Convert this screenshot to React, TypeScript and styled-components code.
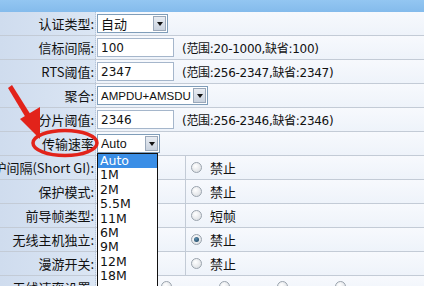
import React from "react";
import styled, { createGlobalStyle } from "styled-components";

const GlobalStyle = createGlobalStyle`
    body, html {
        margin: 0;
        padding: 0;
        overflow: hidden;
        background: #f2f6fb;
    }
`;

const Page = styled.div`
    position: relative;
    width: 424px;
    height: 286px;
    overflow: hidden;
    font-family: "Noto Sans CJK SC", "DejaVu Sans", sans-serif;
    font-size: 13px;
    color: #111;
    background: #f2f6fb;
`;

const TopBar = styled.div`
    height: 12px;
    background: linear-gradient(#93c6f2, #84bbec);
`;

const Row = styled.div<{ $split?: boolean }>`
    display: grid;
    grid-template-columns: ${(p) => (p.$split ? "96px 90px 1fr" : "96px 1fr")};
    height: 24px;
    border-bottom: 1px solid #c3cbd6;
    box-sizing: border-box;
    background: linear-gradient(#f7f9fd, #eef3fa);
`;

const Label = styled.div`
    display: flex;
    align-items: center;
    justify-content: flex-end;
    padding-right: 1px;
    white-space: nowrap;
    overflow: hidden;
    background: linear-gradient(90deg, #cfdcee, #dbe6f4);
    border-right: 1px dotted #b7c6da;
`;

const Cell = styled.div<{ $line?: boolean }>`
    display: flex;
    align-items: center;
    gap: 8px;
    padding-left: 1px;
    white-space: nowrap;
    border-right: ${(p) => (p.$line ? "1px solid #c3cbd6" : "none")};
`;

const RadioCell = styled.div`
    display: flex;
    align-items: center;
    gap: 8px;
    padding-left: 5px;
    white-space: nowrap;
`;

const SelectBox = styled.div<{ $w: number }>`
    position: relative;
    display: flex;
    align-items: center;
    width: ${(p) => p.$w}px;
    height: 19px;
    box-sizing: border-box;
    border: 1px solid #7f9db9;
    background: #fff;
    padding-left: 3px;
    font-size: 12px;
`;

const SelectText = styled.span<{ $latin?: boolean }>`
    flex: 1;
    min-width: 0;
    overflow: hidden;
    white-space: nowrap;
    font-family: ${(p) => (p.$latin ? '"Liberation Sans", sans-serif' : '"Noto Sans CJK SC", sans-serif')};
    font-size: ${(p) => (p.$latin ? "11.5px" : "13px")};
`;

const ArrowBtn = styled.span`
    flex: none;
    width: 13px;
    height: 15px;
    margin-right: 1px;
    display: flex;
    align-items: center;
    justify-content: center;
    background: linear-gradient(#e8ecf2, #c9d2de);
    border: 1px solid #9aa8ba;
    box-sizing: border-box;
    &::after {
        content: "";
        border-left: 3px solid transparent;
        border-right: 3px solid transparent;
        border-top: 4px solid #111;
    }
`;

const TextInput = styled.div`
    display: flex;
    align-items: center;
    width: 77px;
    height: 19px;
    box-sizing: border-box;
    border: 1px solid #a5b6cb;
    background: #fff;
    padding-left: 3px;
    font-family: "DejaVu Sans", sans-serif;
    font-size: 12px;
`;

const Hint = styled.span`
    font-family: "DejaVu Sans", "Noto Sans CJK SC", sans-serif;
    font-size: 12px;
    letter-spacing: -0.3px;
`;

const DropList = styled.div`
    position: absolute;
    top: 18px;
    left: -1px;
    width: 61px;
    background: #fff;
    border: 1px solid #111;
    box-sizing: border-box;
    z-index: 2;
`;

const DropItem = styled.div<{ $active?: boolean }>`
    height: 14.4px;
    line-height: 14.4px;
    padding-left: 2px;
    font-family: "DejaVu Sans", sans-serif;
    font-size: 12.5px;
    color: ${(p) => (p.$active ? "#fff" : "#111")};
    background: ${(p) => (p.$active ? "#3a8ee6" : "transparent")};
`;

const Radio = styled.span<{ $checked?: boolean }>`
    flex: none;
    width: 11px;
    height: 11px;
    border-radius: 50%;
    box-sizing: border-box;
    border: 1px solid #9aa3ad;
    background: radial-gradient(circle at 40% 35%, #ffffff, #d4d8dd);
    display: flex;
    align-items: center;
    justify-content: center;
    &::after {
        content: "";
        display: ${(p) => (p.$checked ? "block" : "none")};
        width: 5px;
        height: 5px;
        border-radius: 50%;
        background: radial-gradient(circle at 40% 35%, #5f8fb0, #123a55);
    }
`;

const BottomRadios = styled.div`
    display: flex;
    align-items: flex-start;
    padding-top: 5px;
    gap: 47px;
    padding-left: 65px;
`;

const Overlay = styled.svg`
    position: absolute;
    left: 0;
    top: 0;
    pointer-events: none;
    z-index: 3;
`;

const rates = ["Auto", "1M", "2M", "5.5M", "11M", "6M", "9M", "12M", "18M", "24M"];

const radioRows = [
    { label: "保护间隔(Short GI):", value: "禁止" },
    { label: "保护模式:", value: "禁止" },
    { label: "前导帧类型:", value: "短帧" },
    { label: "无线主机独立:", value: "禁止", checked: true },
    { label: "漫游开关:", value: "禁止" },
];

const App: React.FC = () => {
    return (
        <>
            <GlobalStyle />
            <Page>
                <TopBar />
                <Row>
                    <Label>认证类型:</Label>
                    <Cell>
                        <SelectBox $w={71}>
                            <SelectText>自动</SelectText>
                            <ArrowBtn />
                        </SelectBox>
                    </Cell>
                </Row>
                <Row>
                    <Label>信标间隔:</Label>
                    <Cell>
                        <TextInput>100</TextInput>
                        <Hint>(范围:20-1000,缺省:100)</Hint>
                    </Cell>
                </Row>
                <Row>
                    <Label>RTS阈值:</Label>
                    <Cell>
                        <TextInput>2347</TextInput>
                        <Hint>(范围:256-2347,缺省:2347)</Hint>
                    </Cell>
                </Row>
                <Row>
                    <Label>聚合:</Label>
                    <Cell>
                        <SelectBox $w={111}>
                            <SelectText $latin>AMPDU+AMSDU</SelectText>
                            <ArrowBtn />
                        </SelectBox>
                    </Cell>
                </Row>
                <Row>
                    <Label>分片阈值:</Label>
                    <Cell>
                        <TextInput>2346</TextInput>
                        <Hint>(范围:256-2346,缺省:2346)</Hint>
                    </Cell>
                </Row>
                <Row>
                    <Label>传输速率</Label>
                    <Cell>
                        <SelectBox $w={63}>
                            <SelectText $latin style={{ fontSize: 12.5 }}>Auto</SelectText>
                            <ArrowBtn />
                            <DropList>
                                {rates.map((r, i) => (
                                    <DropItem key={r} $active={i === 0}>{r}</DropItem>
                                ))}
                            </DropList>
                        </SelectBox>
                    </Cell>
                </Row>
                {radioRows.map((r) => (
                    <Row $split key={r.label}>
                        <Label>{r.label}</Label>
                        <Cell $line />
                        <RadioCell>
                            <Radio $checked={r.checked} />
                            <span>{r.value}</span>
                        </RadioCell>
                    </Row>
                ))}
                <Row>
                    <Label>无线速率设置:</Label>
                    <BottomRadios>
                        <Radio />
                        <Radio />
                        <Radio />
                        <Radio />
                    </BottomRadios>
                </Row>
                <Overlay width="424" height="286" viewBox="0 0 424 286">
                    <ellipse cx="65" cy="143" rx="32" ry="12.5" fill="none" stroke="#e2231a" strokeWidth="3.5" />
                    <path d="M8 88 L12 85 L34 120 L29 123 Z" fill="#e2231a" />
                    <path d="M20 119 L40 107 L40 139 Z" fill="#e2231a" />
                </Overlay>
            </Page>
        </>
    );
};

export default App;
